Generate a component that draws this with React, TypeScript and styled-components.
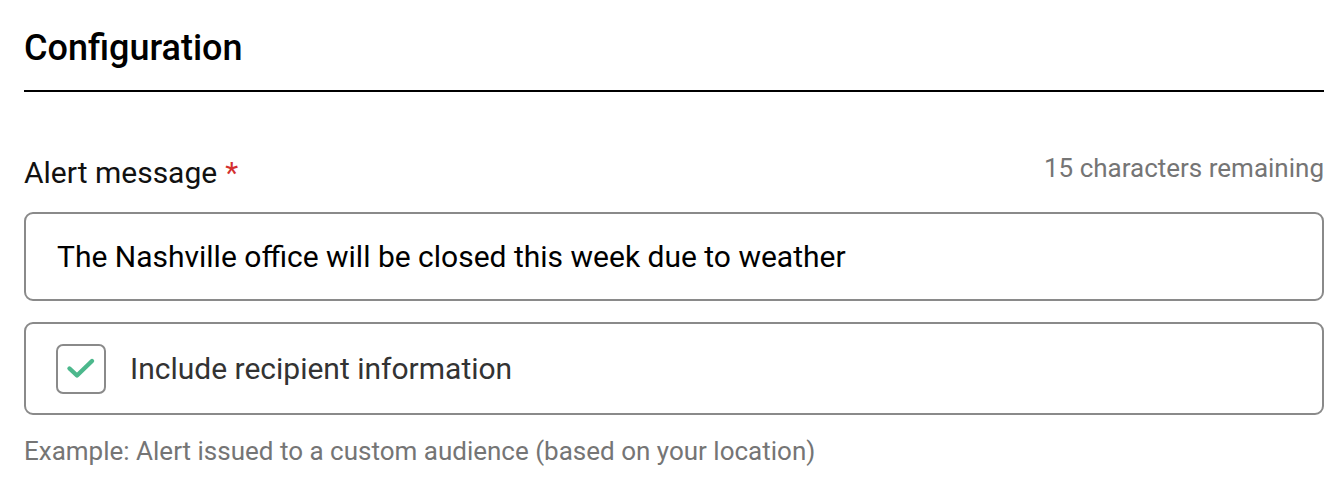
import { useState } from "react";
import styled, { createGlobalStyle } from "styled-components";

const GlobalStyle = createGlobalStyle`
  html, body {
    margin: 0;
    padding: 0;
    background: #ffffff;
    font-family: Roboto, "Liberation Sans", Arial, sans-serif;
  }
`;

const Page = styled.div`
  padding: 0 20px 0 24px;
`;

const Heading = styled.h2`
  margin: 0;
  padding: 28px 0 22px;
  font-size: 36px;
  line-height: 40px;
  font-weight: 500;
  color: #000000;
  border-bottom: 2px solid #000000;
`;

const Field = styled.div`
  margin-top: 63px;
`;

const LabelRow = styled.div`
  display: flex;
  justify-content: space-between;
  align-items: flex-start;
  margin-bottom: 21px;
`;

const Label = styled.label`
  font-size: 30px;
  line-height: 36px;
  color: #111111;
`;

const Required = styled.span`
  color: #d32f2f;
  margin-left: 8px;
`;

const Counter = styled.span`
  font-size: 26px;
  line-height: 26px;
  color: #757575;
`;

const Input = styled.input`
  box-sizing: border-box;
  display: block;
  width: 100%;
  height: 89px;
  padding: 0 31px;
  border: 2px solid #8a8a8a;
  border-radius: 9px;
  font-family: inherit;
  font-size: 30px;
  color: #000000;
  outline: none;
`;

const CheckRow = styled.label`
  box-sizing: border-box;
  display: flex;
  align-items: center;
  gap: 24px;
  height: 93px;
  margin-top: 21px;
  padding: 0 30px;
  border: 2px solid #8a8a8a;
  border-radius: 9px;
  cursor: pointer;
`;

const Box = styled.span`
  box-sizing: border-box;
  width: 50px;
  height: 50px;
  display: flex;
  align-items: center;
  justify-content: center;
  border: 2px solid #8a8a8a;
  border-radius: 7px;
`;

const CheckLabel = styled.span`
  font-size: 30px;
  color: #333333;
`;

const Hint = styled.p`
  margin: 21px 0 0;
  font-size: 26px;
  line-height: 30px;
  color: #757575;
`;

export default function App() {
  const [message, setMessage] = useState(
    "The Nashville office will be closed this week due to weather"
  );
  const [checked, setChecked] = useState(true);

  return (
    <Page>
      <GlobalStyle />
      <Heading>Configuration</Heading>

      <Field>
        <LabelRow>
          <Label htmlFor="alert">
            Alert message<Required>*</Required>
          </Label>
          <Counter>{75 - message.length} characters remaining</Counter>
        </LabelRow>
        <Input
          id="alert"
          value={message}
          onChange={(event) => setMessage(event.target.value)}
        />

        <CheckRow onClick={() => setChecked(!checked)}>
          <Box>
            {checked ? (
              <svg width="30" height="24" viewBox="0 0 30 24" fill="none">
                <path
                  d="M3.5 11.5 L11 18.5 L26 4"
                  stroke="#4cb88c"
                  strokeWidth="4.4"
                  strokeLinecap="round"
                  strokeLinejoin="round"
                />
              </svg>
            ) : null}
          </Box>
          <CheckLabel>Include recipient information</CheckLabel>
        </CheckRow>

        <Hint>Example: Alert issued to a custom audience (based on your location)</Hint>
      </Field>
    </Page>
  );
}
